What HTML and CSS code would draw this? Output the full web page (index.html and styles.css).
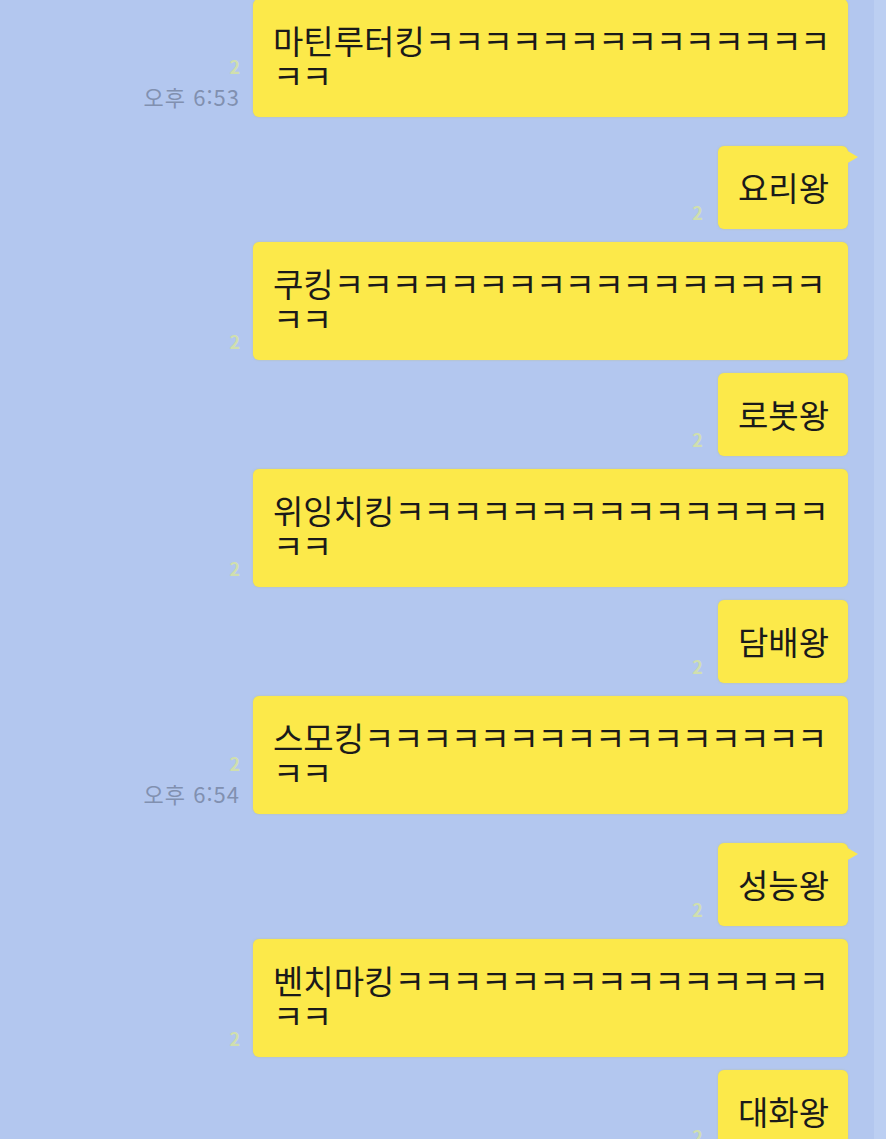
FILE: index.html
```html
<!DOCTYPE html>
<html lang="ko">
<head>
    <meta charset="UTF-8">
    <meta name="viewport" content="width=device-width, initial-scale=1.0">
    <title>채팅</title>
    <link rel="stylesheet" href="styles.css">
</head>
<body>
    <div class="chat">
        <div class="row left">
            <div class="meta">
                <span class="unread">2</span>
                <span class="time">오후 6:53</span>
            </div>
            <div class="bubble">마틴루터킹<span class="kk">ㅋㅋㅋㅋㅋㅋㅋㅋㅋㅋㅋㅋㅋㅋ</span><br><span class="kk">ㅋㅋ</span></div>
        </div>

        <div class="row right group">
            <span class="unread">2</span>
            <div class="bubble tail">요리왕</div>
        </div>

        <div class="row left">
            <div class="meta"><span class="unread">2</span></div>
            <div class="bubble">쿠킹<span class="kk">ㅋㅋㅋㅋㅋㅋㅋㅋㅋㅋㅋㅋㅋㅋㅋㅋㅋ</span><br><span class="kk">ㅋㅋ</span></div>
        </div>

        <div class="row right">
            <span class="unread">2</span>
            <div class="bubble">로봇왕</div>
        </div>

        <div class="row left">
            <div class="meta"><span class="unread">2</span></div>
            <div class="bubble">위잉치킹<span class="kk">ㅋㅋㅋㅋㅋㅋㅋㅋㅋㅋㅋㅋㅋㅋㅋ</span><br><span class="kk">ㅋㅋ</span></div>
        </div>

        <div class="row right">
            <span class="unread">2</span>
            <div class="bubble">담배왕</div>
        </div>

        <div class="row left">
            <div class="meta">
                <span class="unread">2</span>
                <span class="time">오후 6:54</span>
            </div>
            <div class="bubble">스모킹<span class="kk">ㅋㅋㅋㅋㅋㅋㅋㅋㅋㅋㅋㅋㅋㅋㅋㅋ</span><br><span class="kk">ㅋㅋ</span></div>
        </div>

        <div class="row right group">
            <span class="unread">2</span>
            <div class="bubble tail">성능왕</div>
        </div>

        <div class="row left">
            <div class="meta"><span class="unread">2</span></div>
            <div class="bubble">벤치마킹<span class="kk">ㅋㅋㅋㅋㅋㅋㅋㅋㅋㅋㅋㅋㅋㅋㅋ</span><br><span class="kk">ㅋㅋ</span></div>
        </div>

        <div class="row right">
            <span class="unread">2</span>
            <div class="bubble">대화왕</div>
        </div>
    </div>
</body>
</html>
```

FILE: styles.css
```css
html, body {
    margin: 0;
    height: 100%;
    overflow: hidden;
}

body {
    background-color: #b3c7ef;
    font-family: "Noto Sans CJK KR", "Noto Sans", sans-serif;
}

.chat {
    display: flex;
    flex-direction: column;
    gap: 13px;
    margin-top: -1px;
    padding: 0 26px 0 0;
    border-right: 12px solid #bccff2;
}

.row.group {
    margin-top: 16px;
}

.row.left {
    display: grid;
    grid-template-columns: 253px 595px;
}

.row.right {
    display: flex;
    justify-content: flex-end;
    align-items: flex-end;
    gap: 15px;
}

.meta {
    display: flex;
    flex-direction: column;
    align-items: flex-end;
    justify-content: flex-end;
    padding: 0 13px 8px 0;
}

.unread {
    font-size: 18px;
    line-height: 22px;
    font-weight: bold;
    color: #d0dfae;
}

.row.right .unread {
    padding-bottom: 6px;
}

.time {
    font-size: 22px;
    line-height: 26px;
    margin-top: 6px;
    letter-spacing: 1px;
    color: #8190b0;
}

.bubble {
    position: relative;
    background-color: #fce94a;
    color: #1a1a1a;
    font-size: 33px;
    line-height: 35px;
    padding: 24px 19px 24px 20px;
    border-radius: 6px;
    white-space: nowrap;
    box-shadow: 0 0 2px rgba(190, 190, 90, 0.6);
}

.kk {
    letter-spacing: -1.5px;
}

.bubble.tail::after {
    content: "";
    position: absolute;
    right: -10px;
    top: 4px;
    border-left: 12px solid #fce94a;
    border-top: 7px solid transparent;
    border-bottom: 7px solid transparent;
}
```
